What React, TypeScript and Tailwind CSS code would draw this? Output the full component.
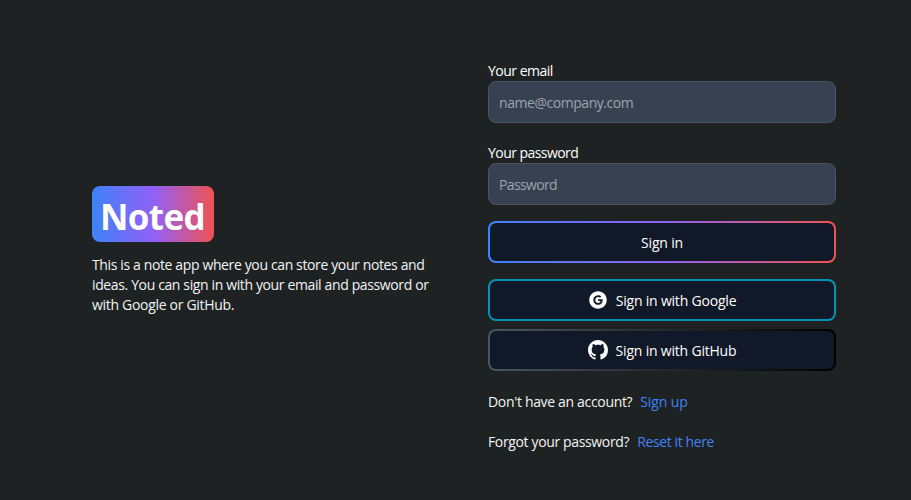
import { BsGithub } from "react-icons/bs";
import { AiFillGoogleCircle } from "react-icons/ai";
import type { ReactNode } from "react";

function Field({ label, type, placeholder, labelClass, inputClass }: { label: string; type: string; placeholder: string; labelClass: string; inputClass: string }) {
  return (
    <label className="block">
      <span className={`block h-5 text-sm leading-5 text-white ${labelClass}`}>{label}</span>
      <input
        type={type}
        placeholder={placeholder}
        className={`block h-[42px] w-full rounded-lg border border-[#4b5563] bg-[#374151] px-2.5 text-sm text-white placeholder:text-[#9ca3af] ${inputClass}`}
      />
    </label>
  );
}

function OutlineButton({ frame, children }: { frame: string; children: ReactNode }) {
  return (
    <button className={`block h-[42px] w-full rounded-lg p-0.5 ${frame}`}>
      <span className="flex h-full items-center justify-center gap-2 rounded-md bg-[#111827] text-sm text-white">
        {children}
      </span>
    </button>
  );
}

export default function App() {
  return (
    <main className="flex h-[500px] w-full items-start bg-[#1e2222] pl-[92px] font-['Open_Sans','Noto_Sans',sans-serif] text-white">
      <section className="w-[396px] pt-[186px]">
        <h1 className="flex h-14 w-[122px] items-center justify-center rounded-lg bg-linear-to-r/srgb from-[#3f83f8] via-[#9061f9] to-[#f05252] pt-1.5 pr-px text-[35px] font-bold tracking-[-0.6px]">
          Noted
        </h1>
        <p className="mt-[13px] whitespace-nowrap text-sm leading-5 text-[#f3f4f6]">
          <span className="block tracking-[-0.37px]">This is a note app where you can store your notes and</span>
          <span className="block tracking-[-0.37px]">ideas. You can sign in with your email and password or</span>
          <span className="block tracking-[-0.31px]">with Google or GitHub.</span>
        </p>
      </section>
      <section className="w-[348px] pt-[61px]">
        <Field label="Your email" type="email" placeholder="name@company.com" labelClass="tracking-[-0.5px]" inputClass="tracking-[-0.45px]" />
        <div className="h-5" />
        <Field label="Your password" type="password" placeholder="Password" labelClass="tracking-[-0.55px]" inputClass="tracking-[-0.65px]" />
        <div className="mt-4">
          <OutlineButton frame="bg-linear-to-r/srgb from-[#3f83f8] via-[#9061f9] to-[#f05252]">
            <span className="pt-0.5 tracking-[-0.2px]">Sign in</span>
          </OutlineButton>
        </div>
        <div className="mt-4 flex flex-col gap-2">
          <OutlineButton frame="bg-[#0891b2]">
            <AiFillGoogleCircle size={20} />
            <span className="pt-0.5 tracking-[-0.2px]">Sign in with Google</span>
          </OutlineButton>
          <OutlineButton frame="bg-linear-to-r/srgb from-[#4b5563] to-black">
            <BsGithub size={20} />
            <span className="pt-0.5 tracking-[-0.2px]">Sign in with GitHub</span>
          </OutlineButton>
        </div>
        <div className="mt-[21px] flex flex-col gap-5 text-sm leading-5 text-[#f3f4f6]">
          <p className="flex gap-2"><span className="tracking-[-0.33px]">Don't have an account?</span><a className="tracking-[-0.1px] text-[#3f83f8]">Sign up</a></p>
          <p className="flex gap-2"><span className="tracking-[-0.36px]">Forgot your password?</span><a className="tracking-[-0.38px] text-[#3f83f8]">Reset it here</a></p>
        </div>
      </section>
    </main>
  );
}
